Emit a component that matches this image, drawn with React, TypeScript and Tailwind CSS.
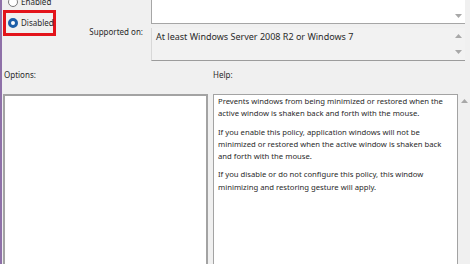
import React from "react";

const helpText = [
  ["Prevents windows from being minimized or restored when the", "active window is shaken back and forth with the mouse."],
  [
    "If you enable this policy, application windows will not be",
    "minimized or restored when the active window is shaken back",
    "and forth with the mouse.",
  ],
  ["If you disable or do not configure this policy, this window", "minimizing and restoring gesture will apply."],
];

const ArrowUp = () => (
  <svg width="7" height="4" viewBox="0 0 7 4">
    <path d="M0 4 L3.5 0 L7 4 Z" fill="#a8a8a8" />
  </svg>
);

const ArrowDown = () => (
  <svg width="7" height="4" viewBox="0 0 7 4">
    <path d="M0 0 L3.5 4 L7 0 Z" fill="#a8a8a8" />
  </svg>
);

export default function App() {
  return (
    <div className="w-[470px] h-[264px] overflow-hidden bg-[#f0f0f0] border-l-2 border-[#8e70a8] font-['Noto_Sans',sans-serif] text-[8px] text-[#2a2a2a]">
      {/* top: radios + comment / supported on */}
      <div className="flex h-[61px]">
        <div className="w-[149px] flex flex-col">
          <div className="-mt-[8px] h-[20px] flex items-center pl-[6px]">
            <span className="shrink-0 w-[10px] h-[10px] rounded-full border border-[#7a7a7a] bg-white" />
            <span className="ml-[3px] leading-[12px] whitespace-nowrap">Enabled</span>
          </div>
          <div className="-mt-[2px] ml-[1px] w-[53px] h-[26px] border-[3px] border-[#e3141b] flex items-center pl-[2px]">
            <span className="shrink-0 w-[10px] h-[10px] rounded-full border-[3px] border-[#1c5ea8] bg-white" />
            <span className="ml-[3px] leading-[12px] whitespace-nowrap">Disabled</span>
          </div>
          <div className="-mt-[9px] self-end pr-[8px] leading-[10px]">Supported on:</div>
        </div>

        <div className="w-[314px] flex flex-col">
          <div className="h-[24px] bg-white border-l border-b border-[#a6a6a6] flex justify-end">
            <div className="w-[13px] flex flex-col items-center justify-end pb-[5px]">
              <ArrowDown />
            </div>
          </div>
          <div className="mt-[4px] h-[33px] bg-[#f2f2f2] border-l border-[#d8d8d8] border-b border-b-[#9c9c9c] flex">
            <div className="flex-1 pl-[4px] pt-[3px] leading-[12px] text-[9px]">At least Windows Server 2008 R2 or Windows 7</div>
            <div className="w-[13px] flex flex-col items-center justify-between pt-[6px] pb-[6px]">
              <ArrowUp />
              <ArrowDown />
            </div>
          </div>
        </div>
      </div>

      {/* labels */}
      <div className="h-[33px] flex pt-[8px] leading-[12px]">
        <div className="w-[211px] pl-[2px]">Options:</div>
        <div>Help:</div>
      </div>

      {/* options / help panes */}
      <div className="flex">
        <div className="ml-[1px] w-[205px] h-[175px] bg-white border-2 border-[#a3a3a3]" />
        <div className="ml-[5px] w-[245px] h-[175px] bg-white border border-[#a3a3a3] pl-[4px] leading-[12.3px] text-[7.7px]">
          {helpText.map((para, i) => (
            <div key={i} className={i > 0 ? "mt-[6px]" : ""}>
              {para.map((line) => (
                <div key={line} className="whitespace-nowrap">
                  {line}
                </div>
              ))}
            </div>
          ))}
        </div>
        <div className="w-[12px] flex justify-center pt-[5px]">
          <div className="h-[4px]">
            <ArrowUp />
          </div>
        </div>
      </div>
    </div>
  );
}
